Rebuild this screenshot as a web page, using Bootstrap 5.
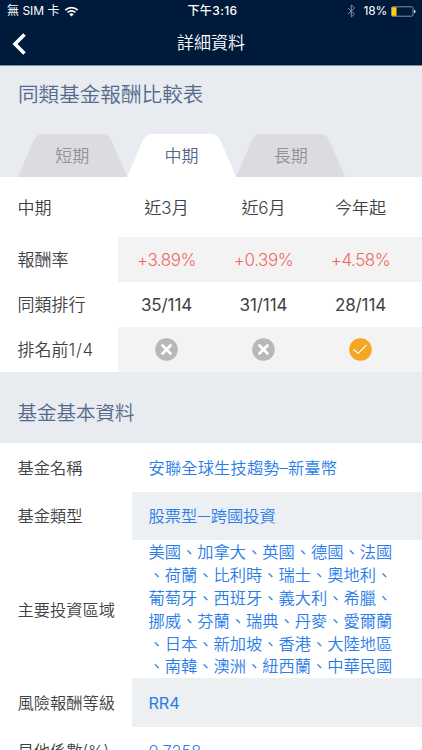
<!DOCTYPE html>
<html lang="zh-Hant-TW">
<head>
<meta charset="utf-8">
<meta name="viewport" content="width=device-width, initial-scale=1">
<title>詳細資料</title>
<link href="https://cdn.jsdelivr.net/npm/bootstrap@5.3.0/dist/css/bootstrap.min.css" rel="stylesheet">
<style>
  body { font-family: Inter, "Noto Sans CJK TC", sans-serif; font-weight: 350; color: #3f4144; background: #fff; height: 750px; overflow: hidden; line-height: 1; }
  .top-area { background: #001a3b; color: #fff; height: 66px; border-bottom: 1px solid #8290a3; }
  .status-bar { height: 22px; font-size: 12px; padding: 0 6px 0 7px; font-weight: 400; }
  .status-side { flex: 1 1 0; }
  .status-time { font-weight: 500; letter-spacing: .4px; padding-left: 2px; }
  .battery-level { letter-spacing: -.2px; }
  .title-bar { height: 43px; font-size: 17px; padding: 0 12px; }
  .title-side { width: 20px; }
  .section-head { background: #e8ebf0; color: #54698d; font-weight: 350; }
  .compare-title { font-size: 20.6px; height: 68px; padding: 17px 18px 0; font-weight: 350; }
  .basic-title { font-size: 19.5px; height: 71px; padding: 12px 17.5px 0; }
  .tab-strip { height: 43px; padding-left: 17.5px; }
  .tab-item { width: 109.3px; height: 43px; font-size: 17px; color: #929295; padding-top: 1px; }
  .tab-item.current { color: #54698d; }
  .cmp-row { height: 45px; font-size: 17px; }
  .cmp-row.heading-row { height: 60px; }
  .cmp-row.heading-row .cmp-values { padding-top: 2px; }
  .cmp-name { width: 118px; padding: 2px 0 0 17.5px; white-space: nowrap; }
  .cmp-values { padding: 1px 13px 0 0; }
  .cmp-row .marks { padding-top: 0; }
  .cmp-row.shaded .cmp-values { background: #f3f3f3; }
  .figures { font-weight: 400; letter-spacing: -.1px; }
  .fraction { letter-spacing: .7px; }
  .gain { color: #f0675f; letter-spacing: -.45px; }
  .info-row { font-size: 16.25px; height: 48.7px; }
  .info-name { width: 132px; padding: 1px 0 0 17.5px; white-space: nowrap; }
  .info-value { color: #2a7de8; padding: 1px 0 0 16.5px; white-space: nowrap; }
  .info-row.shaded .info-value { background: #ecf0f3; }
  .info-row.regions { height: 137.5px; }
  .info-row.regions .info-value { line-height: 22.8px; }
  .fund-name { letter-spacing: .15px; }
  .dash { display: inline-block; width: 13.5px; text-align: center; font-size: 13px; }
</style>
</head>
<body>
<header class="top-area">
  <div class="status-bar d-flex align-items-center">
    <div class="status-side d-flex align-items-center">
      <span>無 SIM 卡</span>
      <svg class="ms-1" width="15" height="11" viewBox="0 0 15 11" fill="none" stroke="#fff" stroke-width="1.7"><path d="M1.3 4.1a8.8 8.8 0 0 1 12.400 0M3.600 6.500a5.500 5.500 0 0 1 7.800 0"/><path d="M7.500 10.600 5.200 8.300a3.300 3.300 0 0 1 4.600 0z" fill="#fff" stroke="none"/></svg>
    </div>
    <div class="status-time">下午3:16</div>
    <div class="status-side d-flex align-items-center justify-content-end">
      <svg width="9" height="14" viewBox="0 0 9 14" fill="none" stroke="#8490a1" stroke-width="1"><path d="M1 4l6.500 6L4.300 13V1l3.200 3L1 10"/></svg>
      <span class="battery-level ms-2">18%</span>
      <svg class="ms-1" width="25" height="11" viewBox="0 0 25 11"><rect x=".5" y=".8" width="21.500" height="9.400" rx="1.200" fill="none" stroke="#8490a1"/><rect x="1" y="1.200" width="4.500" height="8.600" fill="#ffcd0a"/><path d="M23 3.700q1.500.3 1.500 1.800T23 7.300z" fill="#dce1e8"/></svg>
    </div>
  </div>
  <div class="title-bar d-flex align-items-center justify-content-between">
    <div class="title-side"><svg class="d-block" width="15" height="22" viewBox="0 0 15 22" fill="none" stroke="#fff" stroke-width="3.600"><path d="M12.500 1.500 3 11l9.500 9.500"/></svg></div>
    <div>詳細資料</div>
    <div class="title-side"></div>
  </div>
</header>
<main>
  <section class="section-head">
    <h1 class="compare-title m-0">同類基金報酬比較表</h1>
    <nav class="tab-strip d-flex">
      <div class="tab-item position-relative d-flex align-items-center justify-content-center"><svg class="position-absolute top-0 start-0" width="110" height="43" viewBox="0 0 110 43"><path d="M0 43 15.500 7Q18.500 0 25 0H84Q90.500 0 93.500 7L109.300 43z" fill="#dcdbe0"/></svg><span class="position-relative">短期</span></div>
      <div class="tab-item current position-relative d-flex align-items-center justify-content-center"><svg class="position-absolute top-0 start-0" width="110" height="43" viewBox="0 0 110 43"><path d="M0 43 15.500 7Q18.500 0 25 0H84Q90.500 0 93.500 7L109.300 43z" fill="#fff"/></svg><span class="position-relative">中期</span></div>
      <div class="tab-item position-relative d-flex align-items-center justify-content-center"><svg class="position-absolute top-0 start-0" width="110" height="43" viewBox="0 0 110 43"><path d="M0 43 15.500 7Q18.500 0 25 0H84Q90.500 0 93.500 7L109.300 43z" fill="#dcdbe0"/></svg><span class="position-relative">長期</span></div>
    </nav>
  </section>
  <section>
    <div class="cmp-row heading-row d-flex align-items-stretch">
      <div class="cmp-name d-flex align-items-center">中期</div>
      <div class="cmp-values flex-fill d-flex align-items-center text-center"><div class="col">近3月</div><div class="col">近6月</div><div class="col">今年起</div></div>
    </div>
    <div class="cmp-row shaded d-flex align-items-stretch">
      <div class="cmp-name d-flex align-items-center">報酬率</div>
      <div class="cmp-values gain flex-fill d-flex align-items-center text-center"><div class="col">+3.89%</div><div class="col">+0.39%</div><div class="col">+4.58%</div></div>
    </div>
    <div class="cmp-row d-flex align-items-stretch">
      <div class="cmp-name d-flex align-items-center">同類排行</div>
      <div class="cmp-values figures flex-fill d-flex align-items-center text-center"><div class="col">35/114</div><div class="col">31/114</div><div class="col">28/114</div></div>
    </div>
    <div class="cmp-row shaded d-flex align-items-stretch">
      <div class="cmp-name d-flex align-items-center">排名前<span class="fraction">1/4</span></div>
      <div class="cmp-values marks flex-fill d-flex align-items-center text-center">
        <div class="col"><svg class="d-block mx-auto" width="23" height="23" viewBox="0 0 23 23"><circle cx="11.500" cy="11.500" r="11.300" fill="#b8b8b8"/><path d="M7.500 7.500l8 8M15.500 7.500l-8 8" stroke="#fff" stroke-width="2.700" stroke-linecap="round"/></svg></div>
        <div class="col"><svg class="d-block mx-auto" width="23" height="23" viewBox="0 0 23 23"><circle cx="11.500" cy="11.500" r="11.300" fill="#b8b8b8"/><path d="M7.500 7.500l8 8M15.500 7.500l-8 8" stroke="#fff" stroke-width="2.700" stroke-linecap="round"/></svg></div>
        <div class="col"><svg class="d-block mx-auto" width="23" height="23" viewBox="0 0 23 23"><circle cx="11.500" cy="11.500" r="11.300" fill="#f5a623"/><path d="M5 11.700l4.200 3.700 8-8.300" fill="none" stroke="#fff" stroke-width="1.200" stroke-linecap="round" stroke-linejoin="round"/></svg></div>
      </div>
    </div>
  </section>
  <h2 class="section-head basic-title m-0 d-flex align-items-center">基金基本資料</h2>
  <section>
    <div class="info-row d-flex align-items-stretch">
      <div class="info-name d-flex align-items-center">基金名稱</div>
      <div class="info-value fund-name flex-fill d-flex align-items-center">安聯全球生技趨勢–新臺幣</div>
    </div>
    <div class="info-row shaded d-flex align-items-stretch">
      <div class="info-name d-flex align-items-center">基金類型</div>
      <div class="info-value flex-fill d-flex align-items-center">股票型<span class="dash">一</span>跨國投資</div>
    </div>
    <div class="info-row regions d-flex align-items-stretch">
      <div class="info-name d-flex align-items-center">主要投資區域</div>
      <div class="info-value flex-fill">美國、加拿大、英國、德國、法國<br>、荷蘭、比利時、瑞士、奧地利、<br>葡萄牙、西班牙、義大利、希臘、<br>挪威、芬蘭、瑞典、丹麥、愛爾蘭<br>、日本、新加坡、香港、大陸地區<br>、南韓、澳洲、紐西蘭、中華民國</div>
    </div>
    <div class="info-row shaded d-flex align-items-stretch">
      <div class="info-name d-flex align-items-center">風險報酬等級</div>
      <div class="info-value figures flex-fill d-flex align-items-center">RR4</div>
    </div>
    <div class="info-row d-flex align-items-stretch">
      <div class="info-name d-flex align-items-center">貝他係數(%)</div>
      <div class="info-value flex-fill d-flex align-items-center">0.7258</div>
    </div>
  </section>
</main>
<script src="https://cdn.jsdelivr.net/npm/bootstrap@5.3.0/dist/js/bootstrap.bundle.min.js"></script>
</body>
</html>
